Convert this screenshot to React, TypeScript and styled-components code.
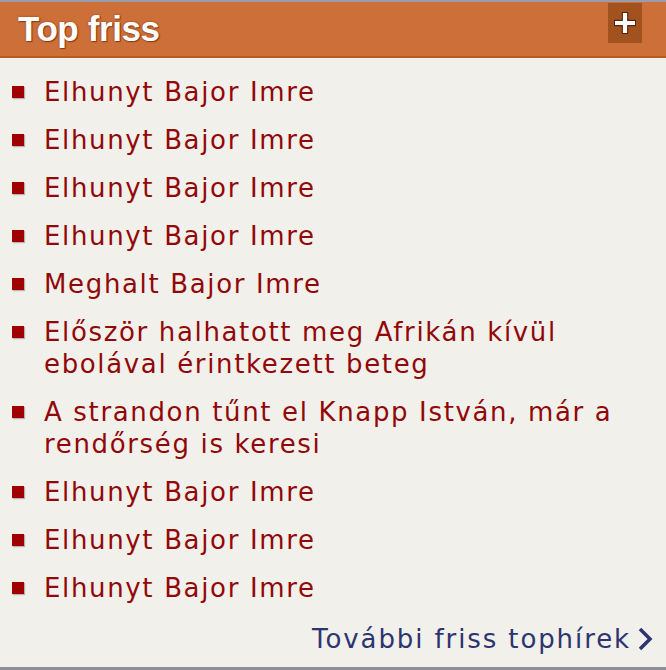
import React from 'react';
import styled, { createGlobalStyle } from 'styled-components';

const Global = createGlobalStyle`
  html, body { margin: 0; padding: 0; background: #f1f0eb; }
`;

const Box_ = styled.div`
  width: 666px;
  height: 670px;
  box-sizing: border-box;
  background: #f1f0eb;
  border-top: 2px solid #9c9ca8;
  border-bottom: 3px solid #8e8e96;
  display: flex;
  flex-direction: column;
`;

const Header_ = styled.div`
  height: 54px;
  background: #cc6f38;
  border-bottom: 2px solid #b95a1f;
  display: flex;
  align-items: flex-start;
  justify-content: space-between;
  padding: 0 24px 0 18px;
`;

const Title_ = styled.h2`
  margin: 0;
  padding-top: 7px;
  font-family: 'Liberation Sans', Arial, sans-serif;
  font-weight: bold;
  font-size: 35px;
  line-height: 40px;
  letter-spacing: -0.4px;
  color: #fff;
  text-shadow: 0 0 2px #8a3a10, 1px 1px 1px #8a3a10;
`;

const PlusButton_ = styled.button`
  margin-top: 1px;
  width: 34px;
  height: 40px;
  border: none;
  padding: 0;
  background: #a2521f;
  display: flex;
  align-items: center;
  justify-content: center;
`;

const List_ = styled.ul`
  list-style: none;
  margin: 0;
  padding: 18px 14px 0 12px;
  display: flex;
  flex-direction: column;
  gap: 16px;
  flex: 1;
`;

const Item_ = styled.li`
  display: flex;
  align-items: flex-start;
`;

const Bullet_ = styled.span`
  flex: none;
  width: 12px;
  height: 12px;
  margin-top: 10px;
  margin-right: 20px;
  background: #a00000;
  box-shadow: 1px 1px 1px rgba(0, 0, 0, 0.25);
`;

const Headline_ = styled.a`
  font-family: 'DejaVu Sans', Verdana, sans-serif;
  font-size: 26px;
  line-height: 32px;
  letter-spacing: 1.65px;
  color: #920808;
  text-decoration: none;
`;

const Footer_ = styled.div`
  display: flex;
  justify-content: flex-end;
  align-items: center;
  padding: 0 13px 13px 0;
`;

const More_ = styled.a`
  font-family: 'DejaVu Sans', Verdana, sans-serif;
  font-size: 26px;
  letter-spacing: 1.9px;
  color: #2d3470;
  text-decoration: none;
  display: flex;
  align-items: center;
  gap: 6px;
`;

const headlines = [
  'Elhunyt Bajor Imre',
  'Elhunyt Bajor Imre',
  'Elhunyt Bajor Imre',
  'Elhunyt Bajor Imre',
  'Meghalt Bajor Imre',
  'Először halhatott meg Afrikán kívül ebolával érintkezett beteg',
  'A strandon tűnt el Knapp István, már a rendőrség is keresi',
  'Elhunyt Bajor Imre',
  'Elhunyt Bajor Imre',
  'Elhunyt Bajor Imre',
];

const App = () => (
  <>
    <Global />
    <Box_>
      <Header_>
        <Title_>Top friss</Title_>
        <PlusButton_>
          <svg width="26" height="26" viewBox="0 0 26 26">
            <path d="M13 2v22M2 13h22" stroke="#5a2308" strokeWidth="6.5" />
            <path d="M13 3v20M3 13h20" stroke="#fff" strokeWidth="4.2" />
          </svg>
        </PlusButton_>
      </Header_>
      <List_>
        {headlines.map((h, i) => (
          <Item_ key={i}>
            <Bullet_ />
            <Headline_ href="#">{h}</Headline_>
          </Item_>
        ))}
      </List_>
      <Footer_>
        <More_ href="#">
          További friss tophírek
          <svg width="16" height="24" viewBox="0 0 16 24">
            <path d="M3 2l10 10-10 10" fill="none" stroke="#2d3470" strokeWidth="3.5" />
          </svg>
        </More_>
      </Footer_>
    </Box_>
  </>
);

export default App;
